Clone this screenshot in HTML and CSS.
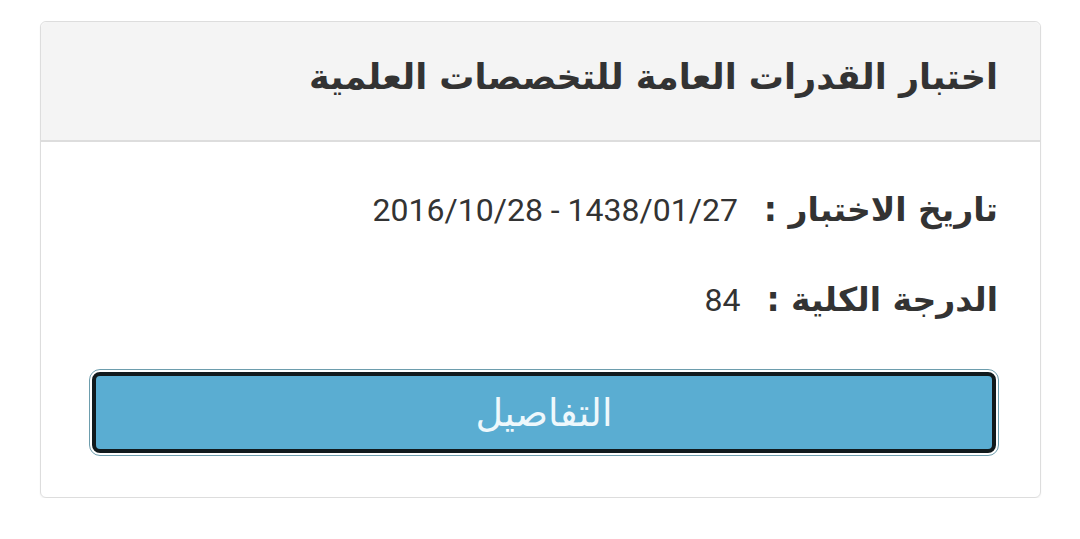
FILE: index.html
```html
<!DOCTYPE html>
<html lang="ar" dir="rtl">
<head>
    <meta charset="utf-8">
    <title>نتيجة الاختبار</title>
    <link rel="stylesheet" href="styles.css">
</head>
<body>
    <div class="panel">
        <div class="panel-heading">
            <h3>اختبار القدرات العامة للتخصصات العلمية</h3>
        </div>
        <div class="panel-body">
            <p class="row"><b>تاريخ الاختبار :</b> <span class="val">1438/01/27 - 2016/10/28</span></p>
            <p class="row"><b>الدرجة الكلية :</b> <span class="val">84</span></p>
            <button type="button" class="btn-details">التفاصيل</button>
        </div>
    </div>
</body>
</html>
```

FILE: styles.css
```css
body { margin: 0; padding: 21px 39px 0 40px; background: #fff; font-family: "DejaVu Sans", sans-serif; color: #333; }
.panel { border: 1px solid #ddd; border-radius: 6px; box-shadow: 0 1px 2px rgba(0,0,0,0.06); }
.panel-heading { background: #f4f4f4; border-bottom: 2px solid #ddd; border-radius: 6px 6px 0 0; height: 120px; padding: 0 42px 8px; box-sizing: border-box; display: flex; align-items: center; }
.panel-heading h3 { margin: 0; font-size: 35px; font-weight: bold; color: #333; }
.panel-body { padding: 43px 42px 44px 45px; }
.row { margin: 0 0 40px; height: 50px; font-size: 33px; line-height: 50px; display: flex; align-items: baseline; gap: 26px; }
.row b { font-weight: bold; }
.val { font-family: Roboto, sans-serif; font-size: 32px; color: #333; }
.btn-details { display: block; width: 904px; height: 81px; margin: 47px 2px 0 0; background: #5aadd2; color: #eef8fc; border: 4px solid #111a1d; border-radius: 8px; outline: 1px solid #6d9dad; outline-offset: 2px; font-family: "DejaVu Sans", sans-serif; font-size: 38px; }
```
